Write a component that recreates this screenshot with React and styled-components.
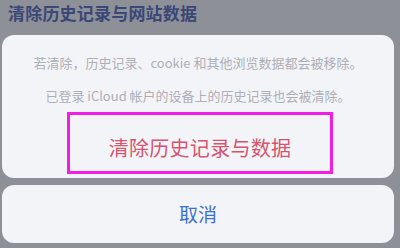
import React from 'react';
import styled, { createGlobalStyle } from 'styled-components';

const GlobalStyle = createGlobalStyle`
	html, body {
		margin: 0;
		padding: 0;
		background: #8e9097;
		font-family: "Noto Sans CJK SC", "Noto Sans", sans-serif;
	}
`

const Sheet = styled.div`
	width: 400px;
	height: 248px;
	overflow: hidden;
	display: flex;
	flex-direction: column;
`

const Title = styled.h1`
	margin: 0;
	height: 35px;
	padding: 0 0 0 8px;
	font-size: 17px;
	line-height: 26px;
	font-weight: 700;
	color: #3b4777;
	letter-spacing: 0.2px;
`

const Card = styled.div`
	margin: 0 6px 0 2px;
	background: #f3f4f8;
	border-radius: 12px;
	padding: ${props => props.$top || 0}px 0 ${props => props.$bottom || 0}px;
	display: flex;
	flex-direction: column;
	align-items: center;
	height: ${props => props.$height}px;
	box-sizing: border-box;
`

const Message = styled.p`
	margin: 0;
	font-size: 13px;
	line-height: 33px;
	color: #aeafb6;
	text-align: center;
	white-space: nowrap;
`

const Danger = styled.button`
	width: 266px;
	height: 62px;
	margin: 0 0 0 4px;
	box-sizing: border-box;
	border: 3px solid #f21ee6;
	background: transparent;
	padding: 8px 0 0;
	font-family: inherit;
	font-size: 20px;
	color: #d6546f;
	letter-spacing: 0.3px;
`

const Gap = styled.div`
	height: 7px;
	flex-shrink: 0;
`

const Cancel = styled.button`
	width: 100%;
	height: 100%;
	border: none;
	background: transparent;
	padding: 0 0 2px;
	font-family: inherit;
	font-size: 19px;
	color: #3d70cf;
`

export default function App() {
	return (
		<Sheet>
			<GlobalStyle />
			<Title>清除历史记录与网站数据</Title>
			<Card $height={143} $top={11} $bottom={4}>
				<Message>若清除，历史记录、cookie 和其他浏览数据都会被移除。</Message>
				<Message>已登录 iCloud 帐户的设备上的历史记录也会被清除。</Message>
				<Danger>清除历史记录与数据</Danger>
			</Card>
			<Gap />
			<Card $height={58}>
				<Cancel>取消</Cancel>
			</Card>
		</Sheet>
	);
}
